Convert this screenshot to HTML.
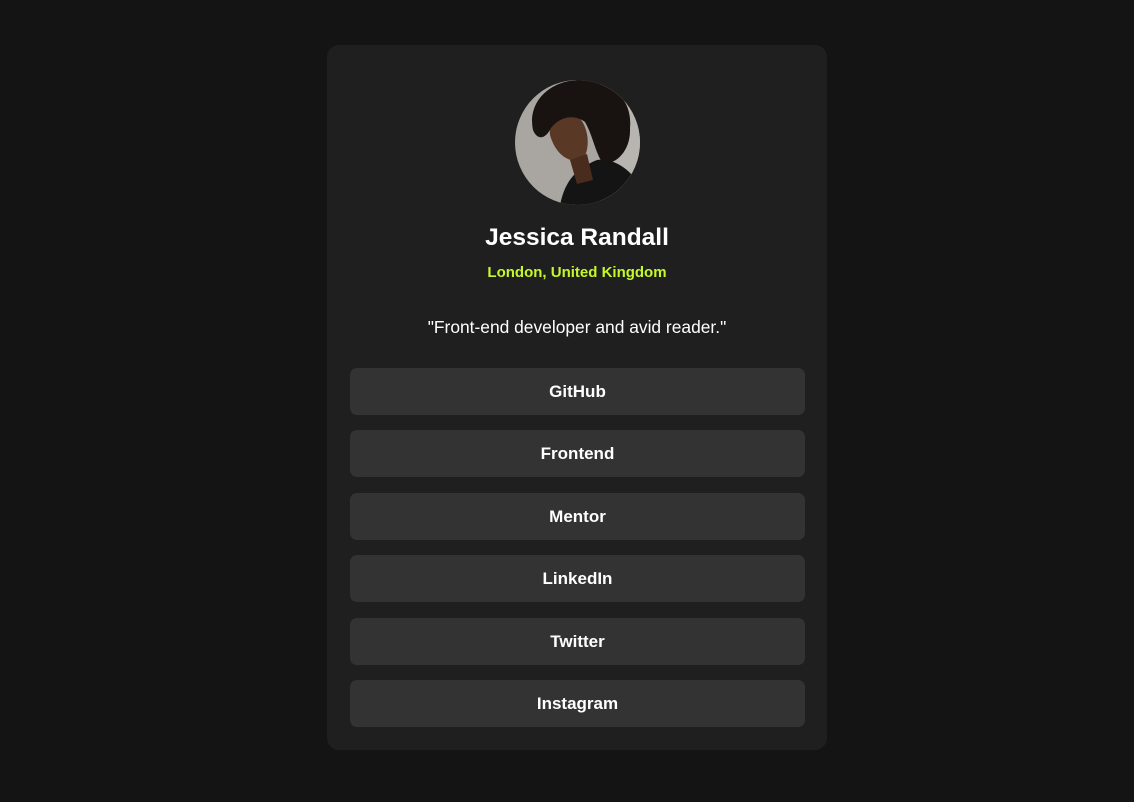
<!DOCTYPE html>
<html><head><style>
html,body{margin:0;padding:0;}
body{width:1134px;height:802px;background:#141414;font-family:"Liberation Sans",Arial,sans-serif;position:relative;overflow:hidden;}
.card{position:absolute;left:327px;top:45px;width:500px;height:705px;background:#1f1f1f;border-radius:12px;}
.av{position:absolute;left:188px;top:35px;width:125px;height:125px;border-radius:50%;overflow:hidden;}
h1{position:absolute;left:0;width:100%;top:181px;margin:0;text-align:center;color:#fff;font-size:24.5px;font-weight:bold;line-height:1;}
.loc{position:absolute;left:0;width:100%;top:219px;text-align:center;color:#c4f82a;font-size:15px;font-weight:bold;}
.q{position:absolute;left:0;width:100%;top:272px;text-align:center;color:#fff;font-size:17.4px;}
.b{position:absolute;left:23px;width:455px;height:47px;background:#333;border-radius:7px;color:#fff;font-weight:bold;font-size:17px;text-align:center;line-height:47px;}
</style></head><body>
<div class="card">
<div class="av"><svg width="125" height="125" viewBox="0 0 125 125">
<rect width="125" height="125" fill="#a9a6a2"/>
<rect x="85" width="40" height="125" fill="#b8b5b1"/>
<path d="M45 125 C50 100 62 88 82 80 C100 78 115 90 125 105 L125 125Z" fill="#141414"/>
<path d="M35 55 C33 40 45 30 60 34 C72 42 76 62 70 76 C62 86 42 80 35 55Z" fill="#5a3826"/>
<path d="M55 80 L72 74 L78 100 L62 104Z" fill="#4a2c1e"/>
<path d="M18 50 C12 22 35 0 65 0 C95 0 118 18 115 48 C116 70 102 84 88 84 C80 72 78 56 70 42 C60 34 45 36 36 48 C30 60 22 60 18 50Z" fill="#181311"/>
</svg></div>
<h1>Jessica Randall</h1>
<div class="loc">London, United Kingdom</div>
<div class="q">"Front-end developer and avid reader."</div>
<div class="b" style="top:323px">GitHub</div>
<div class="b" style="top:385px">Frontend</div>
<div class="b" style="top:448px">Mentor</div>
<div class="b" style="top:510px">LinkedIn</div>
<div class="b" style="top:573px">Twitter</div>
<div class="b" style="top:635px">Instagram</div>
</div>
</body></html>
